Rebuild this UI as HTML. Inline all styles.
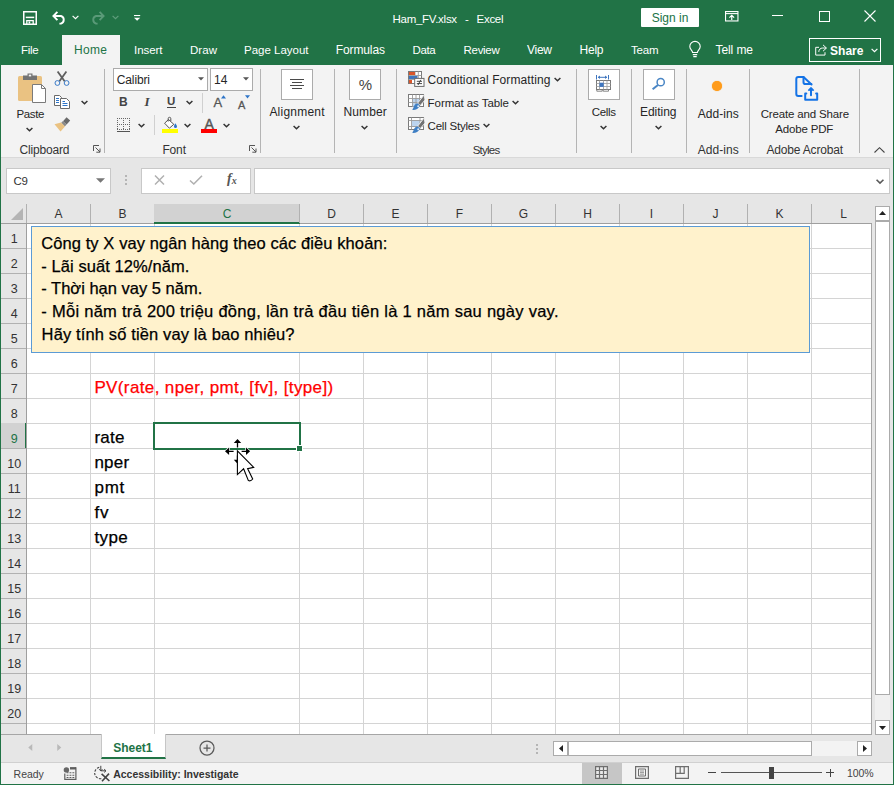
<!DOCTYPE html>
<html><head><meta charset="utf-8"><title>Ham_FV.xlsx - Excel</title>
<style>
*{box-sizing:border-box;margin:0;padding:0}
html,body{width:894px;height:785px;overflow:hidden;background:#e6e6e6}
body{font-family:"Liberation Sans",sans-serif;font-size:12px;color:#262626;position:relative}
.abs,.abs *{position:absolute}
.t{position:absolute;white-space:nowrap;line-height:16px}
.c{transform:translateX(-50%)}
svg{position:absolute;overflow:visible}
/* window frame */
#frame{left:0;top:0;width:894px;height:785px;border:1px solid #217346;border-top:none;z-index:50;pointer-events:none}
#title{left:0;top:0;width:894px;height:65px;background:#217346}
#title .t{color:#fff}
#title div{position:absolute}
#hometab{left:62px;top:35px;width:58px;height:30px;background:#f3f3f3}
#ribbon{left:1px;top:65px;width:892px;height:93px;background:#f3f3f3;border-bottom:1px solid #d9d9d9}
.sep{width:1px;top:69px;height:84px;background:#b4b4b4}
.gl{top:141.8px;color:#333}
#rc{left:0;top:0;width:0;height:0}
#rc div{position:absolute}
.box{background:#fff;border:1px solid #ababab}
/* formula bar */
#fbar{left:1px;top:158px;width:892px;height:46px;background:#e6e6e6}
/* grid */
#grid{left:27px;top:224px;width:845px;height:511px;background:#fff;overflow:hidden;border-right:1px solid #a6a6a6;border-bottom:1px solid #a6a6a6}
#grid div,#fbar div,#colhdr div,#rowhdr div{position:absolute}
.vl{top:0;width:1px;height:511px;background:#d4d4d4}
.hl{left:0;width:849px;height:1px;background:#d4d4d4}
#colhdr{left:1px;top:204px;width:871px;height:20px;background:#e6e6e6;border-bottom:1px solid #9f9f9f}
#colhdr .t{top:2px;color:#333;font-size:12px}
#colhdr .d{top:0;width:1px;height:19px;background:#b1b1b1}
#rowhdr{left:1px;top:224px;width:26px;height:511px;background:#e6e6e6;border-right:1px solid #9f9f9f;border-bottom:1px solid #a6a6a6;overflow:hidden}
#rowhdr .t{left:0.7px;width:25px;text-align:center;color:#333;font-size:12.5px}
#rowhdr .d{left:0;width:25px;height:1px;background:#b1b1b1}
#vsb{left:875px;top:206px;width:15px;height:529px;background:#f0f0f0}
#tabbar{left:1px;top:735px;width:892px;height:27px;background:#e6e6e6}
#status{left:1px;top:762px;width:892px;height:22px;background:#f3f3f3;border-top:1px solid #d0d0d0}
#vsb div,#tabbar div,#status div{position:absolute}
.sb{border-color:#ababab}
.nt{font-size:16.5px !important}
.cell{position:absolute;white-space:nowrap;font-size:16px;line-height:24px;color:#000;-webkit-text-stroke:0.25px currentColor}
</style></head><body>
<div class="abs" id="title">
  <div class="t" style="left:392.5px;top:11px;white-space:pre;font-size:11.5px;letter-spacing:-0.27px;word-spacing:1.1px">Ham_FV.xlsx  -  Excel</div>
  <!-- QAT icons -->
  <svg style="left:23px;top:10.5px" width="14" height="14" viewBox="0 0 14 14" fill="none" stroke="#fff" stroke-width="1.5"><path d="M0.75 0.75H13.25V13.25H0.75Z"/><path d="M2.8 6.4H11.2" /><path d="M3.8 13.2V9.6H10.2V13.2" stroke-width="1.3"/><path d="M5.6 11.5H7.2" stroke-width="2.2"/></svg>
  <svg style="left:52px;top:10.5px" width="15" height="14" viewBox="0 0 15 14" fill="none" stroke="#fff" stroke-width="1.9"><path d="M5.4 0.9L1.4 5L5.4 9.1"/><path d="M1.8 5H9A4 4 0 0 1 9 12.6H7.4"/></svg>
  <svg style="left:72px;top:15px" width="7" height="5" viewBox="0 0 7 5" fill="none" stroke="#fff" stroke-width="1.2"><path d="M0.6 0.8L3.5 3.7L6.4 0.8"/></svg>
  <svg style="left:90px;top:10.5px" width="15" height="14" viewBox="0 0 15 14" fill="none" stroke="#5a9a78" stroke-width="1.9"><path d="M9.6 0.9L13.6 5L9.6 9.1"/><path d="M13.2 5H6A4 4 0 0 0 6 12.6H7.6"/></svg>
  <svg style="left:112px;top:15px" width="7" height="5" viewBox="0 0 7 5" fill="none" stroke="#5f9d7c" stroke-width="1.2"><path d="M0.6 0.8L3.5 3.7L6.4 0.8"/></svg>
  <svg style="left:133.5px;top:15px" width="6.2" height="6.2" viewBox="0 0 7 7" fill="#fff"><rect x="0" y="0" width="7" height="1.2"/><path d="M0 3H7L3.5 6.6Z"/></svg>
  <!-- sign in -->
  <div style="left:641px;top:8px;width:58px;height:19px;background:#fff;border-radius:1px"></div>
  <div class="t c" style="left:670px;top:10px;color:#217346 !important">Sign in</div>
  <!-- window controls -->
  <svg style="left:725px;top:11px" width="14" height="12" viewBox="0 0 14 12" fill="none" stroke="#fff" stroke-width="1.1"><rect x="0.55" y="0.55" width="12.4" height="9.4"/><path d="M0.5 2.6H13"/><path d="M6.75 9V4.4M4.4 6.6L6.75 4.3L9.1 6.6" stroke-width="1.2"/></svg>
  <div style="left:772px;top:15px;width:11px;height:1px;background:#fff"></div>
  <div style="left:819px;top:11px;width:11px;height:11px;border:1px solid #fff"></div>
  <svg style="left:864px;top:10px" width="12" height="12" viewBox="0 0 12 12" fill="none" stroke="#fff" stroke-width="1.1"><path d="M0.5 0.5L11.5 11.5M11.5 0.5L0.5 11.5"/></svg>
  <!-- tabs -->
  <div class="t" style="left:21.0px;top:42px;font-size:11.5px;letter-spacing:-0.277px">File</div>
  <div class="t" style="left:134.0px;top:42px;font-size:11.5px;letter-spacing:-0.053px">Insert</div>
  <div class="t" style="left:190.0px;top:42px;font-size:11.5px;letter-spacing:0.052px">Draw</div>
  <div class="t" style="left:244.0px;top:42px;font-size:11.5px;letter-spacing:-0.009px">Page Layout</div>
  <div class="t" style="left:335.7px;top:42px;letter-spacing:-0.102px">Formulas</div>
  <div class="t" style="left:412.6px;top:42px;font-size:11.5px;letter-spacing:-0.432px">Data</div>
  <div class="t" style="left:463.5px;top:42px;font-size:11.5px;letter-spacing:-0.284px">Review</div>
  <div class="t" style="left:527.0px;top:42px;letter-spacing:-0.266px">View</div>
  <div class="t" style="left:579.5px;top:42px;letter-spacing:-0.229px">Help</div>
  <div class="t" style="left:631.0px;top:42px;font-size:11.5px;letter-spacing:-0.208px">Team</div>
  <svg style="left:689px;top:41px" width="12" height="17" viewBox="0 0 12 17" fill="none" stroke="#fff" stroke-width="1.1"><path d="M3.6 11.5C3.6 9.5 0.8 8.6 0.8 5.6A5.2 5.2 0 0 1 11.2 5.6C11.2 8.6 8.4 9.5 8.4 11.5Z"/><path d="M3.8 13.6H8.2M4.3 15.6H7.7"/></svg>
  <div class="t" style="left:715.5px;top:42px;letter-spacing:-0.086px">Tell me</div>
  <div style="left:809px;top:38px;width:72px;height:24px;border:1px solid #fff"></div>
  <svg style="left:815px;top:44px" width="12.5" height="12" viewBox="0 0 14 13" fill="none" stroke="#fff" stroke-width="1.1"><path d="M4.5 3.5H0.8V12.2H11.2V9"/><path d="M9 0.8L12.8 4.3L9 7.8M12.6 4.3H8.5C6 4.3 4.4 6 4.2 8.6"/></svg>
  <div class="t" style="left:830.0px;top:42.7px;font-weight:bold;font-size:12px;letter-spacing:0.035px">Share</div>
  <svg style="left:871px;top:48px" width="7" height="5" viewBox="0 0 7 5" fill="none" stroke="#fff" stroke-width="1.2"><path d="M0.6 0.8L3.5 3.7L6.4 0.8"/></svg>
</div>
<div class="abs" id="hometab"><div class="t" style="left:12.0px;top:7px;color:#217346;letter-spacing:0.328px">Home</div></div>
<div class="abs" id="ribbon"></div>
<div class="abs" id="rc">
  <!-- Clipboard group -->
  <svg style="left:17px;top:72px" width="30" height="32" viewBox="0 0 30 32">
    <rect x="1" y="4" width="24" height="25" rx="1.5" fill="#eac282"/>
    <path d="M6 3.5H10.5V1.5H15.5V3.5H20V8H6Z" fill="#737373"/><rect x="11.8" y="2.6" width="2.4" height="1.8" fill="#f3f3f3"/>
    <path d="M15.5 12.5H24.5L28.5 16.5V30.5H15.5Z" fill="#fff" stroke="#7a7a7a" stroke-width="1"/><path d="M24.5 12.5V16.5H28.5" fill="none" stroke="#7a7a7a" stroke-width="1"/>
  </svg>
  <div class="t" style="left:16.4px;top:106px;font-size:11.5px;letter-spacing:-0.355px">Paste</div>
  <svg style="left:26px;top:127px" width="7" height="5" viewBox="0 0 7 5" fill="none" stroke="#333" stroke-width="1.45"><path d="M0.6 0.9L3.5 3.8L6.4 0.9"/></svg>
  <svg style="left:54px;top:71px" width="16" height="15" viewBox="0 0 16 15" fill="none"><path d="M3.6 0.4L10.6 10.2M12.4 0.4L5.4 10.2" stroke="#5e5e5e" stroke-width="1.8"/><circle cx="3.4" cy="12" r="2.4" stroke="#3a7bc8" stroke-width="1"/><circle cx="12.6" cy="12" r="2.4" stroke="#3a7bc8" stroke-width="1"/></svg>
  <svg style="left:54px;top:95px" width="16" height="14" viewBox="0 0 16 14" fill="#fff" stroke="#6a6a6a" stroke-width="1"><path d="M0.5 0.5H5.5L7.5 2.5V10.5H0.5Z"/><path d="M6.5 3.5H12.5L15.5 6.5V13.5H6.5Z"/><path d="M2 3.5H5M2 5.5H5M2 7.5H5M8.5 8.5H13.5M8.5 10.5H13.5M8.5 6.5H11" stroke="#2e75c8"/></svg>
  <svg style="left:81px;top:100px" width="7" height="5" viewBox="0 0 7 5" fill="none" stroke="#333" stroke-width="1.45"><path d="M0.6 0.9L3.5 3.8L6.4 0.9"/></svg>
  <svg style="left:54px;top:117px" width="17" height="15" viewBox="0 0 17 15"><path d="M12.5 0.3L16.2 3.6L12.6 7.4L9 4.2Z" fill="#6a6a6a"/><path d="M9 4L12.6 7.6L10.8 9.4L7.2 5.8Z" fill="#8a8a8a"/><path d="M7 5.6L11 9.6L6.5 14.6L0.5 7.2Z" fill="#eac282"/></svg>
  <div class="t gl" style="left:19.5px;;letter-spacing:-0.184px">Clipboard</div>
  <svg style="left:93px;top:145px" width="8" height="8" viewBox="0 0 8 8" fill="none" stroke="#555" stroke-width="1"><path d="M0.5 6V0.5H6"/><path d="M2.5 2.5L7 7M7 3.5V7.2H3.3"/></svg>
  <div class="sep" style="left:104px"></div>
  <!-- Font group -->
  <div class="box" style="left:113px;top:68px;width:95px;height:23px"></div>
  <div class="t" style="left:116.8px;top:72px;letter-spacing:-0.136px">Calibri</div>
  <svg style="left:198px;top:77px" width="6" height="4" viewBox="0 0 6 4"><path d="M0 0.3H6L3 3.6Z" fill="#555"/></svg>
  <div class="box" style="left:210px;top:68px;width:43px;height:23px"></div>
  <div class="t" style="left:214px;top:72px">14</div>
  <svg style="left:243px;top:77px" width="6" height="4" viewBox="0 0 6 4"><path d="M0 0.3H6L3 3.6Z" fill="#555"/></svg>
  <div class="t" style="left:119px;top:93.5px;font-weight:bold;font-size:12px;color:#444">B</div>
  <div class="t" style="left:144.5px;top:93.5px;font-style:italic;font-size:13px;color:#444;font-family:'Liberation Serif',serif;font-weight:bold">I</div>
  <div class="t" style="left:167px;top:93px;font-size:11.5px;font-weight:bold;color:#444">U</div><div style="left:167px;top:106.5px;width:8.5px;height:1.3px;background:#444"></div>
  <svg style="left:186px;top:100px" width="7" height="5" viewBox="0 0 7 5" fill="none" stroke="#333" stroke-width="1.45"><path d="M0.6 0.9L3.5 3.8L6.4 0.9"/></svg>
  <div class="sep" style="left:202px;top:93px;height:20px;background:#d0d0d0"></div>
  <div class="t" style="left:213.5px;top:95.2px;font-size:13px;color:#555;-webkit-text-stroke:0.3px #555">A</div>
  <svg style="left:221px;top:94.5px" width="5" height="4" viewBox="0 0 5 4"><path d="M0 3.6H5L2.5 0.3Z" fill="#2e75c8"/></svg>
  <div class="t" style="left:238px;top:96.8px;font-size:11px;color:#555;-webkit-text-stroke:0.3px #555">A</div>
  <svg style="left:245px;top:94.5px" width="5" height="4" viewBox="0 0 5 4"><path d="M0 0.3H5L2.5 3.6Z" fill="#2e75c8"/></svg>
  <svg style="left:117px;top:117.5px" width="14" height="14" viewBox="0 0 14 14" fill="none" stroke="#666" stroke-width="1" stroke-dasharray="1 1" shape-rendering="crispEdges"><path d="M0 0.5H13M0 6.5H13M0 11.5H13M0.5 0V12M6.5 0V12M12.5 0V12"/><path d="M0 13.5H13" stroke-dasharray="none" stroke="#555"/></svg>
  <svg style="left:138px;top:123px" width="7" height="5" viewBox="0 0 7 5" fill="none" stroke="#333" stroke-width="1.45"><path d="M0.6 0.9L3.5 3.8L6.4 0.9"/></svg>
  <div class="sep" style="left:154px;top:115px;height:20px;background:#d0d0d0"></div>
  <svg style="left:163px;top:117px" width="16" height="12" viewBox="0 0 16 12" fill="none"><path d="M5.5 2.5L10.8 7.3L6.4 11.2L1.6 6.2Z" fill="#fff" stroke="#555" stroke-width="1"/><path d="M5.2 4.5V1.6A1.3 1.3 0 0 1 7.8 1.6V4" stroke="#555" stroke-width="1"/><path d="M12.2 6.2C13.8 8 14 9 14 9.6A1.5 1.5 0 0 1 11 9.6C11 9 11.2 8 12.2 6.2Z" fill="#2e75c8"/></svg>
  <div style="left:162px;top:129px;width:16px;height:4px;background:#ffff00"></div>
  <svg style="left:184px;top:123px" width="7" height="5" viewBox="0 0 7 5" fill="none" stroke="#333" stroke-width="1.45"><path d="M0.6 0.9L3.5 3.8L6.4 0.9"/></svg>
  <div class="t" style="left:204.5px;top:116px;font-size:14px;color:#555;-webkit-text-stroke:0.4px #555">A</div>
  <div style="left:201px;top:129px;width:16px;height:4px;background:#ff0000"></div>
  <svg style="left:223px;top:123px" width="7" height="5" viewBox="0 0 7 5" fill="none" stroke="#333" stroke-width="1.45"><path d="M0.6 0.9L3.5 3.8L6.4 0.9"/></svg>
  <div class="t gl" style="left:162.4px;;letter-spacing:-0.139px">Font</div>
  <svg style="left:249px;top:145px" width="8" height="8" viewBox="0 0 8 8" fill="none" stroke="#555" stroke-width="1"><path d="M0.5 6V0.5H6"/><path d="M2.5 2.5L7 7M7 3.5V7.2H3.3"/></svg>
  <div class="sep" style="left:260px"></div>
  <!-- Alignment -->
  <div class="box" style="left:281px;top:69px;width:32px;height:31px"></div>
  <svg style="left:290px;top:79px" width="14" height="10" viewBox="0 0 14 10" stroke="#4a4a4a" stroke-width="1" shape-rendering="crispEdges"><path d="M0 0.5H14M2 3.5H12M0 6.5H14M2 9.5H12"/></svg>
  <div class="t" style="left:269.4px;top:103.6px;letter-spacing:0.228px">Alignment</div>
  <svg style="left:293px;top:125px" width="7" height="5" viewBox="0 0 7 5" fill="none" stroke="#333" stroke-width="1.45"><path d="M0.6 0.9L3.5 3.8L6.4 0.9"/></svg>
  <div class="sep" style="left:334px"></div>
  <div class="box" style="left:349px;top:69px;width:32px;height:31px"></div>
  <div class="t c" style="left:365.5px;top:76.5px;font-size:15px;color:#444">%</div>
  <div class="t" style="left:343.6px;top:103.6px;letter-spacing:0.082px">Number</div>
  <svg style="left:361px;top:125px" width="7" height="5" viewBox="0 0 7 5" fill="none" stroke="#333" stroke-width="1.45"><path d="M0.6 0.9L3.5 3.8L6.4 0.9"/></svg>
  <div class="sep" style="left:396px"></div>
  <!-- Styles -->
  <svg style="left:408px;top:71px" width="17" height="16" viewBox="0 0 17 16" fill="none">
    <rect x="0.5" y="0.5" width="13" height="12" fill="#fff" stroke="#7a7a7a"/>
    <path d="M7 0.5V8M10.3 0.5V7M0.5 4.5H13.5M0.5 8.5H7" stroke="#9a9a9a" stroke-width="0.9"/>
    <rect x="1" y="1" width="6" height="3" fill="#d9562b"/><rect x="1" y="5" width="8.5" height="3" fill="#3f76bf"/><rect x="1" y="9" width="3" height="3.3" fill="#d9562b"/>
    <rect x="6.7" y="7.4" width="9.3" height="8" fill="#fff" stroke="#6a6a6a"/>
    <path d="M8.8 10.3H14M8.8 12.6H14M12.8 8.8L10 14" stroke="#333" stroke-width="0.9"/>
  </svg>
  <svg style="left:408px;top:94px" width="17" height="17" viewBox="0 0 17 17" fill="none">
    <rect x="0.5" y="0.5" width="15" height="12" fill="#fff" stroke="#7a7a7a"/>
    <rect x="4.5" y="4.5" width="7" height="8" fill="#bcd4ee"/>
    <path d="M4.5 0.5V12.5M8 0.5V12.5M11.5 0.5V12.5M0.5 4.5H15.5M0.5 8.5H15.5" stroke="#9a9a9a" stroke-width="0.9"/>
    <path d="M16.2 0.8L9.6 9.2L12.3 11.5L17 6Z" fill="#727272" stroke="#f3f3f3" stroke-width="0.9"/>
    <path d="M9.8 9.6C8 9.4 6.2 11 5.5 13.5C4.9 15.2 4 15.8 4 15.8C7 16.2 10.5 15.2 12 11.4Z" fill="#3f7fc4"/><circle cx="10.2" cy="12.2" r="1" fill="#dbe8f6"/>
  </svg>
  <svg style="left:408px;top:117px" width="17" height="17" viewBox="0 0 17 17" fill="none">
    <rect x="0.5" y="0.5" width="15" height="12" fill="#fff" stroke="#7a7a7a"/>
    <rect x="4" y="3.5" width="8" height="6" fill="#bcd4ee"/>
    <path d="M3.5 0.5V12.5M12 0.5V12.5M0.5 3.5H15.5M0.5 9.5H15.5" stroke="#9a9a9a" stroke-width="0.9"/>
    <path d="M16.2 0.8L9.6 9.2L12.3 11.5L17 6Z" fill="#727272" stroke="#f3f3f3" stroke-width="0.9"/>
    <path d="M9.8 9.6C8 9.4 6.2 11 5.5 13.5C4.9 15.2 4 15.8 4 15.8C7 16.2 10.5 15.2 12 11.4Z" fill="#3f7fc4"/><circle cx="10.2" cy="12.2" r="1" fill="#dbe8f6"/>
  </svg>
  <div class="t" style="left:427.6px;top:72px;letter-spacing:0.098px">Conditional Formatting</div><svg style="left:554px;top:77px" width="7" height="5" viewBox="0 0 7 5" fill="none" stroke="#333" stroke-width="1.45"><path d="M0.6 0.9L3.5 3.8L6.4 0.9"/></svg>
  <div class="t" style="left:427.6px;top:95px;font-size:11.5px;letter-spacing:-0.061px">Format as Table</div><svg style="left:512px;top:100px" width="7" height="5" viewBox="0 0 7 5" fill="none" stroke="#333" stroke-width="1.45"><path d="M0.6 0.9L3.5 3.8L6.4 0.9"/></svg>
  <div class="t" style="left:427.6px;top:118px;font-size:11.5px;letter-spacing:-0.223px">Cell Styles</div><svg style="left:483px;top:123px" width="7" height="5" viewBox="0 0 7 5" fill="none" stroke="#333" stroke-width="1.45"><path d="M0.6 0.9L3.5 3.8L6.4 0.9"/></svg>
  <div class="t gl" style="left:472.7px;font-size:11.5px;letter-spacing:-0.746px">Styles</div>
  <div class="sep" style="left:576px"></div>
  <!-- Cells -->
  <div class="box" style="left:588px;top:69px;width:32px;height:31px"></div>
  <svg style="left:596px;top:75px" width="15" height="17" viewBox="0 0 15 17" fill="none">
    <path d="M0.5 0V4.5M12.5 0V4.5M2 2.3H11" stroke="#3f76bf" stroke-width="1"/><path d="M4 0.5L1.8 2.3L4 4.1ZM9 0.5L11.2 2.3L9 4.1Z" fill="#3f76bf"/>
    <rect x="0.5" y="5.5" width="14" height="9" fill="#fff" stroke="#7a7a7a"/>
    <path d="M3.5 5.5V14.5M7.5 5.5V14.5M11 5.5V14.5M0.5 8.5H14.5M0.5 11.5H14.5" stroke="#a5a5a5" stroke-width="0.9"/>
    <rect x="3.5" y="7.7" width="4.2" height="4.2" fill="#3f76bf"/>
    <path d="M0.8 14.5V16.2H6.2V14.5M7.2 14.5V16.2H12.5V14.5" stroke="#7a7a7a" stroke-width="0.9"/>
  </svg>
  <div class="t" style="left:591.8px;top:103.6px;font-size:11.5px;letter-spacing:-0.366px">Cells</div>
  <svg style="left:600px;top:125px" width="7" height="5" viewBox="0 0 7 5" fill="none" stroke="#333" stroke-width="1.45"><path d="M0.6 0.9L3.5 3.8L6.4 0.9"/></svg>
  <div class="sep" style="left:631px"></div>
  <div class="box" style="left:643px;top:69px;width:32px;height:31px"></div>
  <svg style="left:651px;top:77px" width="15" height="14" viewBox="0 0 15 14" fill="none" stroke="#4a86c5"><circle cx="9.7" cy="5.2" r="3.6" stroke-width="1.5"/><path d="M7 8L1.6 12.3" stroke-width="2"/></svg>
  <div class="t" style="left:640.0px;top:103.6px;letter-spacing:-0.034px">Editing</div>
  <svg style="left:655px;top:125px" width="7" height="5" viewBox="0 0 7 5" fill="none" stroke="#333" stroke-width="1.45"><path d="M0.6 0.9L3.5 3.8L6.4 0.9"/></svg>
  <div class="sep" style="left:686px"></div>
  <div style="left:712px;top:81px;width:10px;height:10px;border-radius:5px;background:#ff9b1a;box-shadow:0 0 1px #ff9b1a"></div>
  <div class="t" style="left:697.8px;top:106px;letter-spacing:0.035px">Add-ins</div>
  <div class="t gl" style="left:697.8px;;letter-spacing:0.035px">Add-ins</div>
  <div class="sep" style="left:749px"></div>
  <svg style="left:794px;top:74px" width="26" height="28" viewBox="0 0 26 28" fill="none" stroke="#1473e6" stroke-width="2" stroke-linecap="round" stroke-linejoin="round">
    <path d="M7.6 22H4.3A2 2 0 0 1 2.3 20V5A2 2 0 0 1 4.3 3H9.5L17.5 10.5"/><path d="M9.5 3V8.2A1.8 1.8 0 0 0 11.3 10H17.3"/>
    <path d="M12.3 19.5H11.2V25.8H23.2V19.5H22.1"/><path d="M17 21.2V15"/><path d="M14.5 16.2L17 13.6L19.5 16.2Z" fill="#1473e6" stroke-width="1.2"/>
  </svg>
  <div class="t" style="left:760.7px;top:106px;font-size:11.5px;letter-spacing:-0.153px">Create and Share</div>
  <div class="t" style="left:775.3px;top:121px;font-size:11.5px;letter-spacing:-0.169px">Adobe PDF</div>
  <div class="t gl" style="left:766.5px;;letter-spacing:-0.186px">Adobe Acrobat</div>
  <div class="sep" style="left:859px"></div>
  <svg style="left:874px;top:147px" width="11" height="6" viewBox="0 0 11 6" fill="none" stroke="#444" stroke-width="1.1"><path d="M0.5 5.5L5.5 0.7L10.5 5.5"/></svg>
</div>
<div class="abs" id="fbar">
  <div class="box" style="left:5px;top:10px;width:105px;height:26px;border-color:#c8c8c8"></div>
  <div class="t" style="left:12.4px;top:15px;color:#333;font-size:11.5px;letter-spacing:-0.203px">C9</div>
  <svg style="left:95px;top:20px" width="9" height="5" viewBox="0 0 9 5"><path d="M0 0.2H9L4.5 4.8Z" fill="#777"/></svg>
  <div style="left:124px;top:17px;width:2px;height:2px;background:#b5b5b5;box-shadow:0 4px 0 #b5b5b5,0 8px 0 #b5b5b5"></div>
  <div class="box" style="left:140px;top:10px;width:110px;height:26px;border-color:#c8c8c8"></div>
  <svg style="left:153px;top:17px" width="11" height="10" viewBox="0 0 11 10" fill="none" stroke="#b0b0b0" stroke-width="1.5"><path d="M1 0.5L10 9.5M10 0.5L1 9.5"/></svg>
  <svg style="left:188px;top:17px" width="14" height="10" viewBox="0 0 14 10" fill="none" stroke="#b0b0b0" stroke-width="1.6"><path d="M1 5.5L4.8 9L13 0.8"/></svg>
  <div class="t" style="left:226px;top:13px;font-family:'Liberation Serif',serif;font-style:italic;font-weight:bold;font-size:14px;color:#555">f<span style="font-size:10px;position:relative;top:1px">x</span></div>
  <div class="box" style="left:253px;top:10px;width:636px;height:26px;border-color:#c8c8c8"></div>
  <svg style="left:875px;top:20.5px" width="8" height="5.3" viewBox="0 0 9 6" fill="none" stroke="#5a5a5a" stroke-width="1.8"><path d="M0.6 0.8L4.5 4.7L8.4 0.8"/></svg>
</div>
<div class="abs" id="colhdr">
  <svg style="left:10px;top:4px" width="12" height="12" viewBox="0 0 12 12"><path d="M0 12H12V0Z" fill="#b4b4b4"/></svg>
  <div class="d" style="left:25px"></div>
  <div class="t c" style="left:57.5px">A</div>
  <div class="d" style="left:89px"></div>
  <div class="t c" style="left:121.5px">B</div>
  <div class="d" style="left:153px"></div>
  <div style="left:153px;top:0;width:146px;height:20px;background:#d2d2d2;border-bottom:2px solid #217346"></div>
  <div class="t c" style="left:226.0px;color:#217346">C</div>
  <div class="d" style="left:298px"></div>
  <div class="t c" style="left:330.5px">D</div>
  <div class="d" style="left:362px"></div>
  <div class="t c" style="left:394.5px">E</div>
  <div class="d" style="left:426px"></div>
  <div class="t c" style="left:458.5px">F</div>
  <div class="d" style="left:490px"></div>
  <div class="t c" style="left:522.5px">G</div>
  <div class="d" style="left:554px"></div>
  <div class="t c" style="left:586.5px">H</div>
  <div class="d" style="left:618px"></div>
  <div class="t c" style="left:650.5px">I</div>
  <div class="d" style="left:682px"></div>
  <div class="t c" style="left:714.5px">J</div>
  <div class="d" style="left:746px"></div>
  <div class="t c" style="left:778.5px">K</div>
  <div class="d" style="left:810px"></div>
  <div class="t c" style="left:842.5px">L</div>
</div>
<div class="abs" id="rowhdr">
  <div class="t" style="top:6.9px">1</div>
  <div class="d" style="top:24px"></div>
  <div class="t" style="top:31.9px">2</div>
  <div class="d" style="top:49px"></div>
  <div class="t" style="top:56.9px">3</div>
  <div class="d" style="top:74px"></div>
  <div class="t" style="top:81.9px">4</div>
  <div class="d" style="top:99px"></div>
  <div class="t" style="top:106.9px">5</div>
  <div class="d" style="top:124px"></div>
  <div class="t" style="top:131.9px">6</div>
  <div class="d" style="top:149px"></div>
  <div class="t" style="top:156.9px">7</div>
  <div class="d" style="top:174px"></div>
  <div class="t" style="top:181.9px">8</div>
  <div class="d" style="top:199px"></div>
  <div style="left:0;top:199px;width:26px;height:26px;background:#d2d2d2;border-right:2px solid #217346"></div>
  <div class="t" style="top:206.9px;color:#217346">9</div>
  <div class="d" style="top:224px"></div>
  <div class="t" style="top:231.9px">10</div>
  <div class="d" style="top:249px"></div>
  <div class="t" style="top:256.9px">11</div>
  <div class="d" style="top:274px"></div>
  <div class="t" style="top:281.9px">12</div>
  <div class="d" style="top:299px"></div>
  <div class="t" style="top:306.9px">13</div>
  <div class="d" style="top:324px"></div>
  <div class="t" style="top:331.9px">14</div>
  <div class="d" style="top:349px"></div>
  <div class="t" style="top:356.9px">15</div>
  <div class="d" style="top:374px"></div>
  <div class="t" style="top:381.9px">16</div>
  <div class="d" style="top:399px"></div>
  <div class="t" style="top:406.9px">17</div>
  <div class="d" style="top:424px"></div>
  <div class="t" style="top:431.9px">18</div>
  <div class="d" style="top:449px"></div>
  <div class="t" style="top:456.9px">19</div>
  <div class="d" style="top:474px"></div>
  <div class="t" style="top:481.9px">20</div>
  <div class="d" style="top:499px"></div>
  <div class="d" style="top:524px"></div>
</div>
<div class="abs" id="grid">
  <div class="vl" style="left:63px"></div>
  <div class="vl" style="left:127px"></div>
  <div class="vl" style="left:272px"></div>
  <div class="vl" style="left:336px"></div>
  <div class="vl" style="left:400px"></div>
  <div class="vl" style="left:464px"></div>
  <div class="vl" style="left:528px"></div>
  <div class="vl" style="left:592px"></div>
  <div class="vl" style="left:656px"></div>
  <div class="vl" style="left:720px"></div>
  <div class="vl" style="left:784px"></div>
  <div class="hl" style="top:24px"></div>
  <div class="hl" style="top:49px"></div>
  <div class="hl" style="top:74px"></div>
  <div class="hl" style="top:99px"></div>
  <div class="hl" style="top:124px"></div>
  <div class="hl" style="top:149px"></div>
  <div class="hl" style="top:174px"></div>
  <div class="hl" style="top:199px"></div>
  <div class="hl" style="top:224px"></div>
  <div class="hl" style="top:249px"></div>
  <div class="hl" style="top:274px"></div>
  <div class="hl" style="top:299px"></div>
  <div class="hl" style="top:324px"></div>
  <div class="hl" style="top:349px"></div>
  <div class="hl" style="top:374px"></div>
  <div class="hl" style="top:399px"></div>
  <div class="hl" style="top:424px"></div>
  <div class="hl" style="top:449px"></div>
  <div class="hl" style="top:474px"></div>
  <div class="hl" style="top:499px"></div>
  <div class="hl" style="top:524px"></div>
  <div id="note" style="left:4px;top:2px;width:779px;height:127px;background:#fff2cc;border:1px solid #5b9bd5"></div>
  <div class="cell nt" style="left:14.2px;top:7.1px;letter-spacing:0.091px">Công ty X vay ngân hàng theo các điều khoản:</div>
  <div class="cell nt" style="left:14.3px;top:29.8px;letter-spacing:0.069px">- Lãi suất 12%/năm.</div>
  <div class="cell nt" style="left:14.3px;top:51.7px;letter-spacing:0.003px">- Thời hạn vay 5 năm.</div>
  <div class="cell nt" style="left:14.3px;top:75.2px;letter-spacing:0.273px">- Mỗi năm trả 200 triệu đồng, lần trả đầu tiên là 1 năm sau ngày vay.</div>
  <div class="cell nt" style="left:14.6px;top:97.9px;letter-spacing:0.130px">Hãy tính số tiền vay là bao nhiêu?</div>
  <div class="cell" style="left:67.4px;top:151.5px;color:#f00;font-size:17px;letter-spacing:0.376px">PV(rate, nper, pmt, [fv], [type])</div>
  <div class="cell" style="left:67.4px;top:202px;font-size:17px;letter-spacing:0.234px">rate</div>
  <div class="cell" style="left:67.4px;top:227px;font-size:17px;letter-spacing:0.256px">nper</div>
  <div class="cell" style="left:67.4px;top:252px;font-size:17px;letter-spacing:0.8px">pmt</div>
  <div class="cell" style="left:67.6px;top:277px;font-size:17px;letter-spacing:0.7px">fv</div>
  <div class="cell" style="left:67.6px;top:302px;font-size:17px;letter-spacing:0.286px">type</div>
  <div style="left:126px;top:198px;width:148px;height:28px;border:2px solid #217346"></div>
  <div style="left:269px;top:221px;width:7px;height:7px;background:#217346;border:1px solid #fff"></div>
</div>
<div class="abs" id="vsb">
  <div class="box sb" style="left:0;top:0;width:15px;height:15px"></div>
  <svg style="left:4px;top:5px" width="7" height="4" viewBox="0 0 7 4"><path d="M0 4H7L3.5 0Z" fill="#222"/></svg>
  <div class="box sb" style="left:0;top:15px;width:15px;height:474px"></div>
  <div class="box sb" style="left:0;top:514px;width:15px;height:15px"></div>
  <svg style="left:4px;top:520px" width="7" height="4" viewBox="0 0 7 4"><path d="M0 0H7L3.5 4Z" fill="#222"/></svg>
</div>
<div class="abs" id="tabbar">
  <svg style="left:27px;top:9px" width="4.5" height="7" viewBox="0 0 4 7"><path d="M4 0V7L0 3.5Z" fill="#b9b9b9"/></svg>
  <svg style="left:56px;top:9px" width="4.5" height="7" viewBox="0 0 4 7"><path d="M0 0V7L4 3.5Z" fill="#b9b9b9"/></svg>
  <div style="left:100px;top:-1px;width:65px;height:25px;background:#fff;border-bottom:2px solid #217346;border-left:1px solid #c6c6c6;border-right:1px solid #c6c6c6"></div>
  <div class="t" style="left:112.2px;top:5px;color:#217346;font-weight:bold;letter-spacing:-0.012px">Sheet1</div>
  <svg style="left:198px;top:5px" width="16" height="16" viewBox="0 0 16 16" fill="none" stroke="#5a5a5a" stroke-width="1.25"><circle cx="8" cy="8" r="7"/><path d="M8 4.5V11.5M4.5 8H11.5"/></svg>
  <div style="left:535px;top:9px;width:2px;height:2px;background:#b5b5b5;box-shadow:0 4px 0 #b5b5b5,0 8px 0 #b5b5b5"></div>
  <div style="left:552px;top:6px;width:319px;height:15px;background:#f3f3f3"></div>
  <div class="box sb" style="left:552px;top:6px;width:15px;height:15px"></div>
  <svg style="left:558px;top:10px" width="4" height="7" viewBox="0 0 4 7"><path d="M4 0V7L0 3.5Z" fill="#222"/></svg>
  <div class="box sb" style="left:567px;top:6px;width:244px;height:15px"></div>
  <div class="box sb" style="left:856px;top:6px;width:15px;height:15px"></div>
  <svg style="left:862px;top:10px" width="4" height="7" viewBox="0 0 4 7"><path d="M0 0V7L4 3.5Z" fill="#222"/></svg>
</div>
<div class="abs" id="status">
  <div class="t" style="left:12.6px;top:3px;color:#444;font-size:10.5px;letter-spacing:-0.040px">Ready</div>
  <svg style="left:63px;top:4px" width="13" height="14" viewBox="0 0 13 14" fill="none" stroke="#5e5e5e"><circle cx="2.4" cy="2.9" r="2.7" fill="#666" stroke="none"/><path d="M6 1.3H12" stroke-width="2.4"/><path d="M11.9 0.2V12.9M12.4 12.3H0.2M0.8 12.9V6.5" stroke-width="1.2"/><path d="M2.6 5.8H10.4M2.6 8.2H10.4M2.6 10.5H10.4" stroke-width="1.1" stroke-dasharray="1.9 1"/></svg>
  <svg style="left:93px;top:2px" width="17" height="17" viewBox="0 0 17 17" fill="none" stroke="#444"><path d="M5.2 2.4A5.5 5.5 0 1 0 7.6 13.6" stroke-width="1.1" stroke-dasharray="2.4 1.3"/><path d="M6.8 0.8V5.8H11.6" stroke-width="1"/><path d="M5.2 4.2L6.8 6L8.4 4.2M10.2 4.2L12 5.8L10.2 7.4" stroke-width="1"/><path d="M7.6 8.8L15.4 16M15 8.6L8 16.2" stroke-width="1.6"/></svg>
  <div class="t" style="left:112.2px;top:3px;font-weight:bold;color:#333;font-size:10.5px;letter-spacing:-0.007px">Accessibility: Investigate</div>
  <div style="left:581px;top:0;width:40px;height:22px;background:#c6c6c6"></div>
  <svg style="left:594px;top:3px" width="13" height="13" viewBox="0 0 13 13" fill="#e9e9e9" stroke="#6e6e6e" stroke-width="1.2"><path d="M0.6 0.6H12.4V12.4H0.6ZM4.5 0.5V12.5M8.5 0.5V12.5M0.5 4.5H12.5M0.5 8.5H12.5"/></svg>
  <svg style="left:634px;top:3px" width="14" height="13" viewBox="0 0 14 13" fill="none" stroke="#6e6e6e" stroke-width="1.2"><path d="M0.6 0.6H13.4V12.4H0.6Z"/><path d="M3.5 3H10.5V10H3.5Z" stroke-width="1"/><path d="M5 5H9M5 6.6H9M5 8.2H9" stroke-width="0.7"/></svg>
  <svg style="left:674px;top:3px" width="14" height="13" viewBox="0 0 14 13" fill="none" stroke="#6e6e6e" stroke-width="1.2"><path d="M0.6 0.6H13.4V12.4H0.6Z"/><path d="M5.2 0.5V7.3M9.2 0.5V7.3M0.5 7.3H9.8"/></svg>
  <div style="left:707px;top:9px;width:8px;height:1px;background:#444"></div>
  <div style="left:720px;top:9px;width:101px;height:1px;background:#555"></div>
  <div style="left:768px;top:4px;width:5px;height:12px;background:#444"></div>
  <div style="left:825px;top:9px;width:8px;height:1px;background:#444"></div>
  <div style="left:828.5px;top:5.5px;width:1px;height:8px;background:#444"></div>
  <div class="t" style="left:846.0px;top:2px;font-size:10.5px;color:#444;letter-spacing:-0.120px">100%</div>
</div>
<svg id="cursor" style="left:224px;top:438px;z-index:40" width="32" height="46" viewBox="0 0 32 46">
  <g fill="#000" stroke="#fff" stroke-width="1.4" paint-order="stroke">
   <path d="M13.5 0.9L17.2 4.9H14.15V9.4H12.85V4.9H9.8Z"/>
   <path d="M1 13.3L5.1 9.6V12.65H9.6V13.95H5.1V17Z"/>
   <path d="M26.1 13.3L22 9.6V12.65H17.6V13.95H22V17Z"/>
   <path d="M13.5 25.8L9.8 21.8H12.85V17.5H14.15V21.8H17.2Z"/>
  </g>
  <path d="M13.4 12.9V36.6L19.6 30.8L24.4 42.6Q26.8 43.6 28.7 41L23.6 30.6L29.7 29.3Z" fill="#fff" stroke="#000" stroke-width="1.1" stroke-linejoin="miter"/>
</svg>
<div class="abs" id="frame"></div>
</body></html>
